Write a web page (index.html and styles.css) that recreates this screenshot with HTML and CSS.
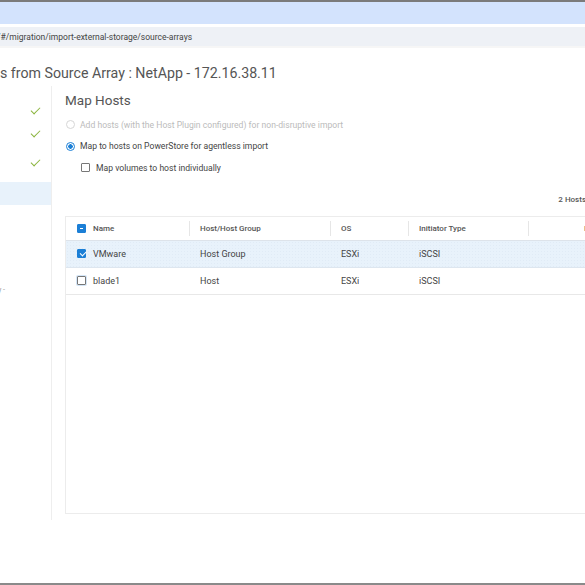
FILE: index.html
```html
<!DOCTYPE html>
<html lang="en">
  <head>
    <meta charset="UTF-8" />
    <meta name="viewport" content="width=device-width, initial-scale=1.0" />
    <title>Import External Storage</title>
    <link rel="stylesheet" href="styles.css">
  </head>
  <body>
    <div class="chrome">
      <div class="tabbar"></div>
      <div class="addr">
        <span class="addr-text"><span class="cut">/</span>#/migration/import-external-storage/source-arrays</span>
      </div>
    </div>

    <div class="page-title">s from Source Array : NetApp - 172.16.38.11</div>

    <div class="wizard">
      <aside class="steps">
        <div class="step done"><span class="check"></span></div>
        <div class="step done"><span class="check"></span></div>
        <div class="step done tall"><span class="check"></span></div>
        <div class="step current"></div>
        <div class="step-spacer"></div>
        <div class="step-note">y -</div>
      </aside>

      <main class="panel">
        <h2 class="panel-title">Map Hosts</h2>

        <label class="option disabled">
          <span class="radio"></span>
          Add hosts (with the Host Plugin configured) for non-disruptive import
        </label>
        <label class="option">
          <span class="radio on"></span>
          Map to hosts on PowerStore for agentless import
        </label>
        <label class="option sub">
          <span class="box"></span>
          Map volumes to host individually
        </label>

        <div class="count-bar"><span class="count">2 Hosts</span></div>

        <div class="table">
          <div class="row head">
            <div class="cell c1"><span class="box mixed"></span>Name</div>
            <div class="cell c2">Host/Host Group</div>
            <div class="cell c3">OS</div>
            <div class="cell c4">Initiator Type</div>
            <div class="cell c5">I</div>
          </div>
          <div class="row selected">
            <div class="cell c1"><span class="box on"></span>VMware</div>
            <div class="cell c2">Host Group</div>
            <div class="cell c3">ESXi</div>
            <div class="cell c4">iSCSI</div>
            <div class="cell c5"></div>
          </div>
          <div class="row">
            <div class="cell c1"><span class="box focus"></span>blade1</div>
            <div class="cell c2">Host</div>
            <div class="cell c3">ESXi</div>
            <div class="cell c4">iSCSI</div>
            <div class="cell c5"></div>
          </div>
        </div>
      </main>
    </div>

    <div class="bottom-edge"></div>
  </body>
</html>
```

FILE: styles.css
```css
* {
  box-sizing: border-box;
}
:root {
  --text-color: #444;
  --muted-color: #bbb;
  --line-color: #e8e8e8;
  --blue: #1b7fd6;
  --select-bg: #e8f2fb;
  --green: #8ab43c;
}

html,
body {
  margin: 0;
  width: 585px;
  height: 585px;
  overflow: hidden;
}

body {
  font-family: Roboto, "Liberation Sans", sans-serif;
  color: var(--text-color);
  background: #fff;
  display: flex;
  flex-direction: column;
  border-top: 2px solid #7b7b7b;
}

.tabbar {
  height: 22px;
  background: #d3e3fd;
}

.addr {
  margin-top: 3px;
  height: 21px;
  background: #eef1f6;
  display: flex;
  align-items: center;
  font-size: 8.5px;
  color: #444;
  white-space: nowrap;
  border-bottom: 2px solid #f6f6f6;
}

.addr-text .cut {
  margin-left: -3px;
}

.page-title {
  height: 38px;
  padding-top: 17px;
  font-size: 14.2px;
  color: #555;
  white-space: nowrap;
}

.wizard {
  display: flex;
  height: 434px;
}

.steps {
  width: 52px;
  border-right: 1px solid #eee;
  display: flex;
  flex-direction: column;
  padding-top: 13px;
  flex-shrink: 0;
}

.step {
  height: 23px;
  display: flex;
  align-items: center;
  justify-content: flex-end;
  padding-right: 11px;
}

.step.tall {
  height: 36px;
}

.step.current {
  height: 23px;
  margin-top: 1px;
  background: var(--select-bg);
}

.check {
  width: 9px;
  height: 5px;
  border-left: 1.5px solid var(--green);
  border-bottom: 1.5px solid var(--green);
  transform: rotate(-45deg);
  margin-top: -3px;
}

.step-spacer {
  height: 81px;
}

.step-note {
  font-size: 7px;
  color: #999;
  margin-left: -2px;
}

.panel {
  flex: 1;
  padding-left: 13px;
  padding-top: 6px;
  white-space: nowrap;
}

.panel-title {
  margin: 0 0 6px;
  font-size: 13.5px;
  font-weight: 400;
  color: #555;
}

.option {
  display: flex;
  align-items: center;
  gap: 5px;
  height: 21.5px;
  font-size: 8.6px;
  color: var(--text-color);
}

.option.disabled {
  color: var(--muted-color);
}

.option.sub {
  padding-left: 16px;
  gap: 6px;
}

.radio {
  width: 9px;
  height: 9px;
  border-radius: 50%;
  border: 1px solid #bbb;
  margin-left: 1px;
}

.option.disabled .radio {
  border-color: #d6d6d6;
}

.radio.on {
  border-color: var(--blue);
  background: radial-gradient(circle, var(--blue) 0 2px, transparent 2.5px);
}

.box {
  width: 9px;
  height: 9px;
  border: 1px solid #777;
  border-radius: 1px;
  position: relative;
  flex-shrink: 0;
}

.box.on,
.box.mixed {
  background: var(--blue);
  border-color: var(--blue);
}

.box.on::after {
  content: "";
  position: absolute;
  left: 1.5px;
  top: 1px;
  width: 5px;
  height: 2.5px;
  border-left: 1px solid #fff;
  border-bottom: 1px solid #fff;
  transform: rotate(-45deg);
}

.box.mixed::after {
  content: "";
  position: absolute;
  left: 2px;
  top: 3px;
  width: 3px;
  height: 1px;
  background: #fff;
}

.box.focus {
  box-shadow: 0 0 0 1px #d3e5f7;
}

.count-bar {
  width: 540px;
  display: flex;
  justify-content: flex-end;
  padding-right: 19px;
  margin-top: 16px;
  height: 19px;
}

.count {
  font-size: 8px;
  font-weight: 500;
  color: #555;
}

.table {
  width: 560px;
  height: 298px;
  border: 1px solid #ececec;
  border-right: none;
  margin-top: 2px;
}

.row {
  display: flex;
  height: 27px;
  border-bottom: 1px solid var(--line-color);
  font-size: 9px;
  color: var(--text-color);
}

.row.head {
  height: 24px;
  font-size: 8px;
  font-weight: 500;
  color: #555;
  border-bottom: 1px solid #dde3ea;
}

.row.selected {
  background-color: var(--select-bg);
  background-image: radial-gradient(#e0ebf6 0.5px, transparent 0.7px);
  background-size: 3px 3px;
  border-bottom-color: #dde6ef;
}

.cell {
  display: flex;
  align-items: center;
  gap: 7px;
  padding-left: 11px;
  position: relative;
}

.row.head .cell + .cell::before {
  content: "";
  position: absolute;
  left: 0;
  top: 4px;
  bottom: 4px;
  border-left: 1px solid #e6e6e6;
}

.c1 {
  width: 123px;
}

.c2 {
  width: 141px;
}

.c3 {
  width: 78px;
}

.c4 {
  width: 120px;
}

.c5 {
  flex: 1;
  padding-left: 56px;
}

.bottom-edge {
  margin-top: auto;
  height: 2px;
  background: #8a8a8a;
}
```
